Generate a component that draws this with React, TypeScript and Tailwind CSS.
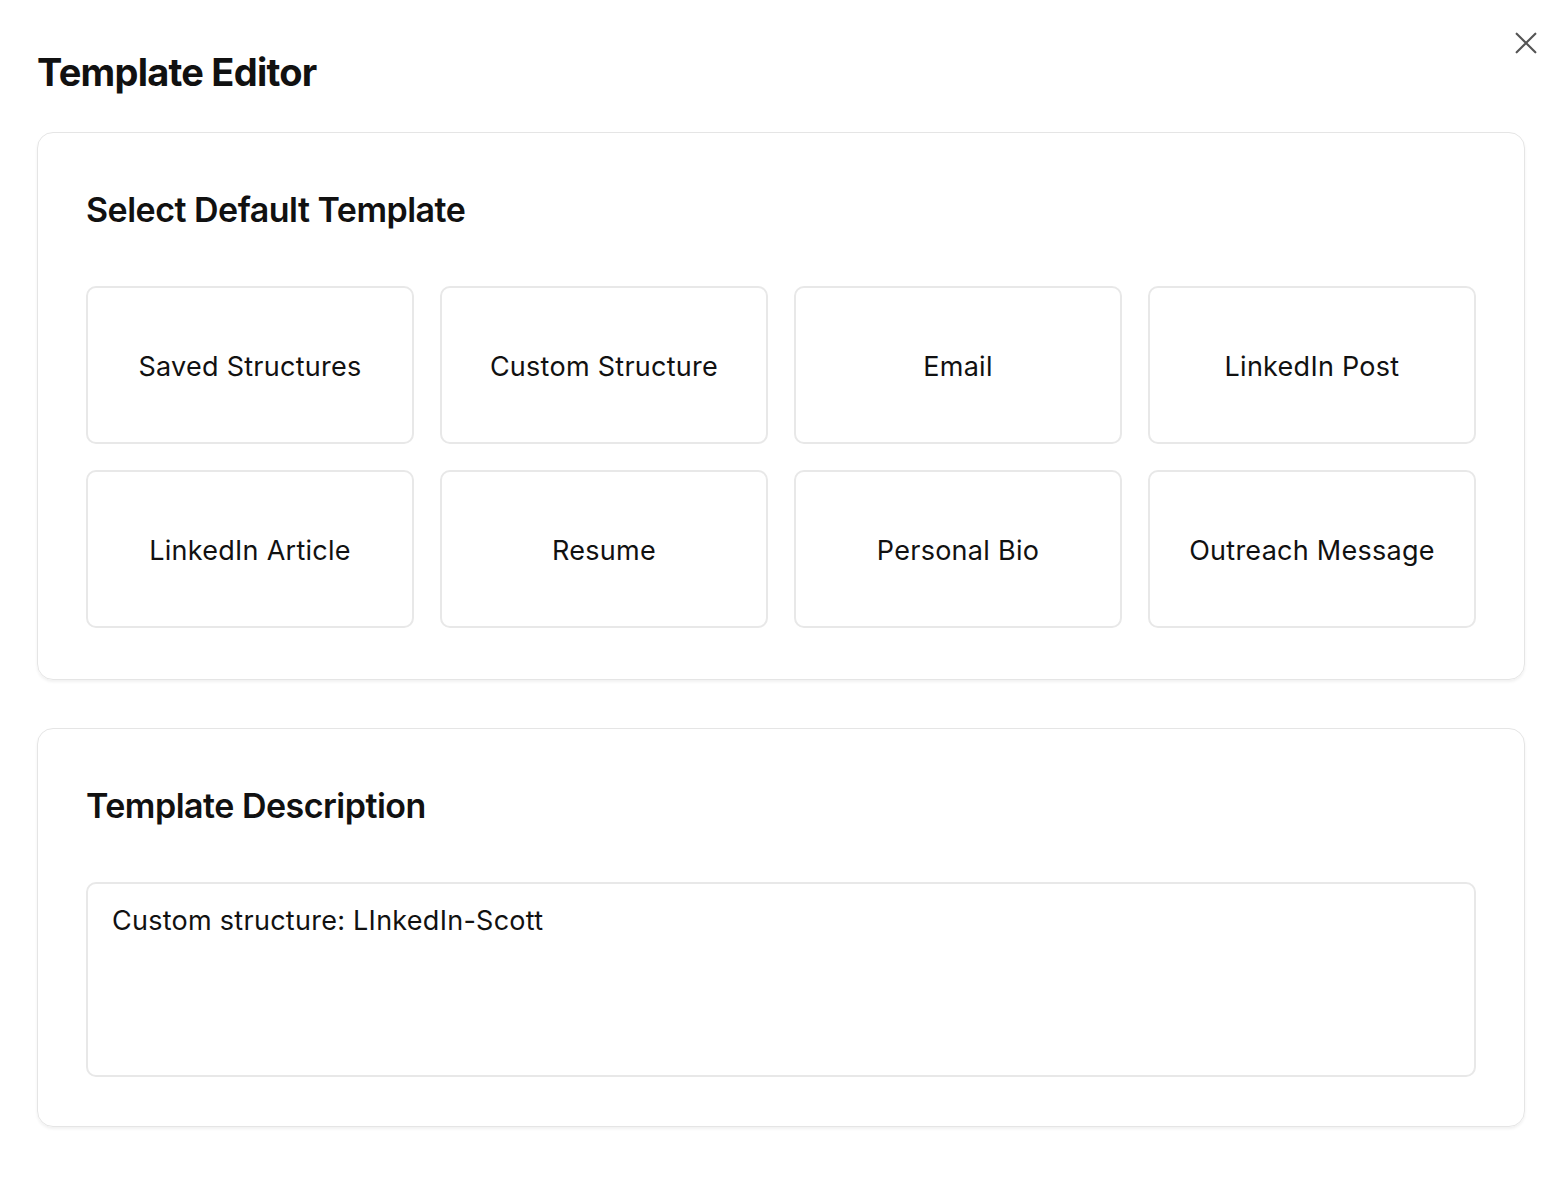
import React, { useState } from 'react';

const TEMPLATES = [
  'Saved Structures',
  'Custom Structure',
  'Email',
  'LinkedIn Post',
  'LinkedIn Article',
  'Resume',
  'Personal Bio',
  'Outreach Message',
];

export default function App() {
  const [selected, setSelected] = useState<string | null>(null);
  const [desc, setDesc] = useState('Custom structure: LInkedIn-Scott');

  return (
    <div className="min-h-screen bg-white pl-[37px] pr-[29px] pt-[46px] pb-14 text-[#111] font-['Inter',sans-serif] relative">
      <button className="absolute right-[12px] top-[27px] w-[32px] h-[32px] flex items-center justify-center text-[#555]">
        <svg width="32" height="32" viewBox="0 0 24 24" fill="none" stroke="currentColor" strokeWidth="1.6" strokeLinecap="round">
          <path d="M5 5L19 19M19 5L5 19" />
        </svg>
      </button>

      <h1 className="text-[38px] leading-[52px] font-bold tracking-[-0.02em] mb-[34px]">Template Editor</h1>

      <section className="border border-[#e5e5e5] rounded-2xl shadow-[0_2px_3px_rgba(0,0,0,0.06)] px-[48px] pt-[57px] pb-[51px] mb-[48px]">
        <h2 className="text-[34px] leading-[40px] font-semibold tracking-[-0.015em] mb-[56px]">Select Default Template</h2>
        <div className="grid grid-cols-4 gap-[26px]">
          {TEMPLATES.map(t => (
            <button
              key={t}
              onClick={() => setSelected(t)}
              className={
                'h-[158px] rounded-[10px] border-2 pt-[4px] flex items-center justify-center text-[27px] tracking-[0.01em] ' +
                (selected === t ? 'border-[#111]' : 'border-[#e8e8e8]')
              }
            >
              {t}
            </button>
          ))}
        </div>
      </section>

      <section className="border border-[#e5e5e5] rounded-2xl shadow-[0_2px_3px_rgba(0,0,0,0.06)] px-[48px] pt-[57px] pb-[49px]">
        <h2 className="text-[34px] leading-[40px] font-semibold tracking-[-0.015em] mb-[56px]">Template Description</h2>
        <textarea
          value={desc}
          onChange={e => setDesc(e.target.value)}
          className="block w-full h-[195px] resize-none rounded-[10px] border-2 border-[#e8e8e8] px-[24px] pt-[19px] pb-[17px] text-[27px] leading-[36px] tracking-[0.01em] outline-none font-['Inter',sans-serif]"
        />
      </section>
    </div>
  );
}
